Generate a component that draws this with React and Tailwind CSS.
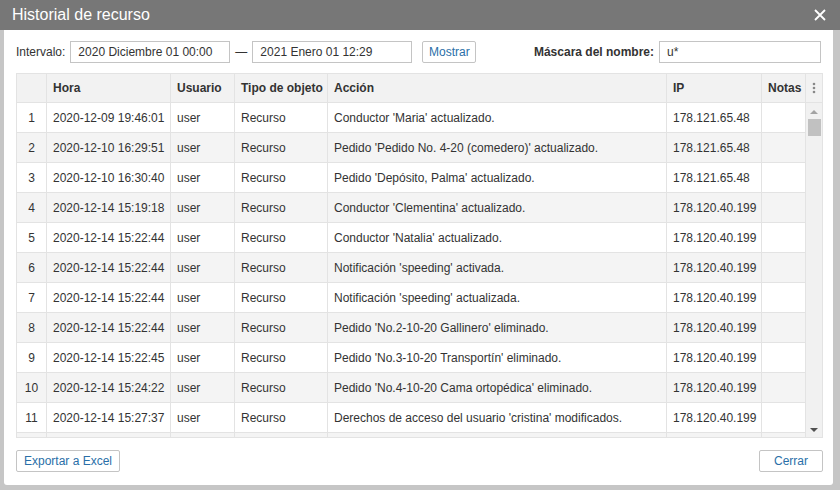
import React from 'react';

const cols = [
  { key: 'n', label: '', w: 'w-[30px]', center: true },
  { key: 'hora', label: 'Hora', w: 'w-[124px]' },
  { key: 'user', label: 'Usuario', w: 'w-[64px]' },
  { key: 'tipo', label: 'Tipo de objeto', w: 'w-[93px]' },
  { key: 'accion', label: 'Acción', w: 'w-[339px]' },
  { key: 'ip', label: 'IP', w: 'w-[95px]' },
  { key: 'notas', label: 'Notas', w: 'w-[44px]' },
];

const rows = [
  ['2020-12-09 19:46:01', "Conductor 'Maria' actualizado.", '178.121.65.48'],
  ['2020-12-10 16:29:51', "Pedido 'Pedido No. 4-20 (comedero)' actualizado.", '178.121.65.48'],
  ['2020-12-10 16:30:40', "Pedido 'Depósito, Palma' actualizado.", '178.121.65.48'],
  ['2020-12-14 15:19:18', "Conductor 'Clementina' actualizado.", '178.120.40.199'],
  ['2020-12-14 15:22:44', "Conductor 'Natalia' actualizado.", '178.120.40.199'],
  ['2020-12-14 15:22:44', "Notificación 'speeding' activada.", '178.120.40.199'],
  ['2020-12-14 15:22:44', "Notificación 'speeding' actualizada.", '178.120.40.199'],
  ['2020-12-14 15:22:44', "Pedido 'No.2-10-20 Gallinero' eliminado.", '178.120.40.199'],
  ['2020-12-14 15:22:45', "Pedido 'No.3-10-20 Transportín' eliminado.", '178.120.40.199'],
  ['2020-12-14 15:24:22', "Pedido 'No.4-10-20 Cama ortopédica' eliminado.", '178.120.40.199'],
  ['2020-12-14 15:27:37', "Derechos de acceso del usuario 'cristina' modificados.", '178.120.40.199'],
  ['', '', ''],
];

const Cell = ({ col, children, header }) => (
  <div
    className={`${col.w} shrink-0 h-full flex items-center border-r border-[#e3e3e3] ${
      col.center ? 'justify-center' : 'pl-[6px]'
    } ${header ? 'font-bold' : ''} whitespace-nowrap overflow-hidden`}
  >
    {children}
  </div>
);

export default function App() {
  return (
    <div
      className="w-[840px] h-[490px] bg-[#c6c6c6] flex flex-col text-[12px] text-[#333]"
      style={{ fontFamily: '"Liberation Sans", Arial, sans-serif' }}
    >
      {/* Title bar */}
      <div className="h-[30px] bg-[#777777] flex items-center justify-between pl-3 pr-[14px] shrink-0">
        <span className="text-white text-[16px]">Historial de recurso</span>
        <svg width="12" height="12" viewBox="0 0 12 12">
          <path d="M1 1L11 11M11 1L1 11" stroke="white" strokeWidth="1.8" />
        </svg>
      </div>

      {/* Body */}
      <div className="ml-[4px] mr-[7px] mb-[5px] flex-1 bg-white rounded-b-[3px] flex flex-col px-3 min-h-0">
        {/* Toolbar */}
        <div className="h-[43px] flex items-center shrink-0 pt-[1px]">
          <span>Intervalo:</span>
          <div className="ml-[5px] w-[160px] h-[22px] border border-[#c4c4c4] flex items-center px-[7px]">
            2020 Diciembre 01 00:00
          </div>
          <span className="mx-[5px]">—</span>
          <div className="w-[160px] h-[22px] border border-[#c4c4c4] flex items-center px-[7px]">
            2021 Enero 01 12:29
          </div>
          <button className="ml-[10px] w-[54px] h-[22px] border border-[#c4c4c4] rounded-[2px] text-[#2a6fa8] flex items-center justify-center">
            Mostrar
          </button>
          <span className="ml-auto font-bold">Máscara del nombre:</span>
          <div className="ml-[5px] w-[162px] h-[22px] border border-[#c4c4c4] flex items-center px-[7px]">
            u*
          </div>
        </div>

        {/* Table */}
        <div className="h-[365px] border border-[#e3e3e3] flex flex-col overflow-hidden shrink-0 mr-[-2px]">
          <div className="h-[29px] bg-[#f2f2f2] flex shrink-0 border-b border-[#e3e3e3]">
            {cols.map((c) => (
              <Cell key={c.key} col={c} header>
                {c.label}
              </Cell>
            ))}
            <div className="flex-1 flex items-center justify-center">
              <svg width="4" height="12" viewBox="0 0 4 12">
                <circle cx="2" cy="2" r="1.3" fill="#888" />
                <circle cx="2" cy="6" r="1.3" fill="#888" />
                <circle cx="2" cy="10" r="1.3" fill="#888" />
              </svg>
            </div>
          </div>
          <div className="flex flex-1 min-h-0">
            <div className="flex flex-col overflow-hidden">
              {rows.map((r, i) => (
                <div
                  key={i}
                  className={`h-[30px] shrink-0 flex border-b border-[#e3e3e3] ${
                    i % 2 === 1 ? 'bg-[#f4f4f4]' : 'bg-white'
                  }`}
                >
                  <Cell col={cols[0]}>{r[0] ? i + 1 : ''}</Cell>
                  <Cell col={cols[1]}>{r[0]}</Cell>
                  <Cell col={cols[2]}>{r[0] ? 'user' : ''}</Cell>
                  <Cell col={cols[3]}>{r[0] ? 'Recurso' : ''}</Cell>
                  <Cell col={cols[4]}>{r[1]}</Cell>
                  <Cell col={cols[5]}>{r[2]}</Cell>
                  <Cell col={cols[6]}></Cell>
                </div>
              ))}
            </div>
            {/* Scrollbar */}
            <div className="flex-1 bg-[#f1f1f1] flex flex-col items-center">
              <svg width="8" height="6" viewBox="0 0 8 6" className="mt-[6px]">
                <path d="M0 5L4 1L8 5Z" fill="#a3a3a3" />
              </svg>
              <div className="mt-[4px] w-[13px] h-[17px] bg-[#c1c1c1]" />
              <div className="flex-1" />
              <svg width="8" height="6" viewBox="0 0 8 6" className="mb-[4px]">
                <path d="M0 1L4 5L8 1Z" fill="#505050" />
              </svg>
            </div>
          </div>
        </div>

        {/* Footer */}
        <div className="flex items-center justify-between flex-1 pb-[1px]">
          <button className="h-[22px] px-[7px] border border-[#c4c4c4] rounded-[2px] text-[#2a6fa8]">
            Exportar a Excel
          </button>
          <button className="h-[22px] w-[64px] border border-[#c4c4c4] rounded-[2px] text-[#2a6fa8] mr-[-2px]">
            Cerrar
          </button>
        </div>
      </div>
    </div>
  );
}
